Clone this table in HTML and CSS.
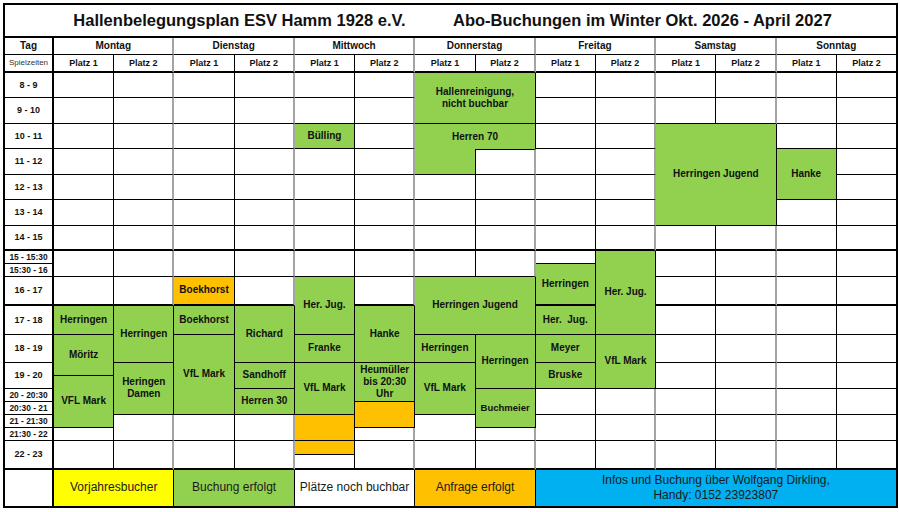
FILE: index.html
```html
<!DOCTYPE html>
<html lang="de">
<head>
<meta charset="utf-8">
<title>Hallenbelegungsplan ESV Hamm 1928 e.V.</title>
<link rel="stylesheet" href="styles.css">
</head>
<body>
<div class="plan">
  <!-- title -->
  <div class="c title"><span class="tl">Hallenbelegungsplan ESV Hamm 1928 e.V.</span><span class="tr">Abo-Buchungen im Winter Okt. 2026 - April 2027</span></div>

  <!-- day header -->
  <div class="c t hd">Tag</div>
  <div class="c s2 de hd">Montag</div>
  <div class="c s2 de hd">Dienstag</div>
  <div class="c s2 de hd">Mittwoch</div>
  <div class="c s2 de hd">Donnerstag</div>
  <div class="c s2 de hd">Freitag</div>
  <div class="c s2 de hd">Samstag</div>
  <div class="c s2 hd">Sonntag</div>

  <!-- platz header -->
  <div class="c t tb sp">Spielzeiten</div>
  <div class="c tb pl">Platz 1</div><div class="c tb de pl">Platz 2</div>
  <div class="c tb pl">Platz 1</div><div class="c tb de pl">Platz 2</div>
  <div class="c tb pl">Platz 1</div><div class="c tb de pl">Platz 2</div>
  <div class="c tb pl">Platz 1</div><div class="c tb de pl">Platz 2</div>
  <div class="c tb pl">Platz 1</div><div class="c tb de pl">Platz 2</div>
  <div class="c tb pl">Platz 1</div><div class="c tb de pl">Platz 2</div>
  <div class="c tb pl">Platz 1</div><div class="c tb pl">Platz 2</div>

  <!-- 8 - 9 -->
  <div class="c t">8 - 9</div>
  <div class="c"></div><div class="c de"></div>
  <div class="c"></div><div class="c de"></div>
  <div class="c"></div><div class="c de"></div>
  <div class="c g s2 r2 sm2"><span>Hallenreinigung,<br>nicht buchbar</span></div>
  <div class="c"></div><div class="c de"></div>
  <div class="c"></div><div class="c de"></div>
  <div class="c"></div><div class="c"></div>

  <!-- 9 - 10 -->
  <div class="c t">9 - 10</div>
  <div class="c"></div><div class="c de"></div>
  <div class="c"></div><div class="c de"></div>
  <div class="c"></div><div class="c de"></div>
  <div class="c"></div><div class="c de"></div>
  <div class="c"></div><div class="c de"></div>
  <div class="c"></div><div class="c"></div>

  <!-- 10 - 11 -->
  <div class="c t">10 - 11</div>
  <div class="c"></div><div class="c de"></div>
  <div class="c"></div><div class="c de"></div>
  <div class="c g">Bülling</div><div class="c de"></div>
  <div class="c g s2 nb">Herren 70</div>
  <div class="c"></div><div class="c de"></div>
  <div class="c g s2 r4">Herringen Jugend</div>
  <div class="c"></div><div class="c"></div>

  <!-- 11 - 12 -->
  <div class="c t">11 - 12</div>
  <div class="c"></div><div class="c de"></div>
  <div class="c"></div><div class="c de"></div>
  <div class="c"></div><div class="c de"></div>
  <div class="c g"></div><div class="c de bt"></div>
  <div class="c"></div><div class="c de"></div>
  <div class="c g r2">Hanke</div><div class="c"></div>

  <!-- 12 - 13 -->
  <div class="c t">12 - 13</div>
  <div class="c"></div><div class="c de"></div>
  <div class="c"></div><div class="c de"></div>
  <div class="c"></div><div class="c de"></div>
  <div class="c"></div><div class="c de"></div>
  <div class="c"></div><div class="c de"></div>
  <div class="c"></div>

  <!-- 13 - 14 -->
  <div class="c t">13 - 14</div>
  <div class="c"></div><div class="c de"></div>
  <div class="c"></div><div class="c de"></div>
  <div class="c"></div><div class="c de"></div>
  <div class="c"></div><div class="c de"></div>
  <div class="c"></div><div class="c de"></div>
  <div class="c"></div><div class="c"></div>

  <!-- 14 - 15 -->
  <div class="c t tb">14 - 15</div>
  <div class="c tb"></div><div class="c tb de"></div>
  <div class="c tb"></div><div class="c tb de"></div>
  <div class="c tb"></div><div class="c tb de"></div>
  <div class="c tb"></div><div class="c tb de"></div>
  <div class="c tb"></div><div class="c tb de"></div>
  <div class="c tb"></div><div class="c tb de"></div>
  <div class="c tb"></div><div class="c tb"></div>

  <!-- 15 - 15:30 -->
  <div class="c t st">15 - 15:30</div>
  <div class="c r2"></div><div class="c r2 de"></div>
  <div class="c r2"></div><div class="c r2 de"></div>
  <div class="c r2"></div><div class="c r2 de"></div>
  <div class="c r2"></div><div class="c r2 de"></div>
  <div class="c"></div>
  <div class="c g r4">Her. Jug.</div>
  <div class="c r2"></div><div class="c r2 de"></div>
  <div class="c r2"></div><div class="c r2"></div>

  <!-- 15:30 - 16 -->
  <div class="c t st">15:30 - 16</div>
  <div class="c g r2 tb">Herringen</div>

  <!-- 16 - 17 -->
  <div class="c t tb">16 - 17</div>
  <div class="c tb"></div><div class="c tb de"></div>
  <div class="c o tb">Boekhorst</div><div class="c tb de"></div>
  <div class="c g r2">Her. Jug.</div><div class="c tb de"></div>
  <div class="c g s2 r2">Herringen Jugend</div>
  <div class="c tb"></div><div class="c tb de"></div>
  <div class="c tb"></div><div class="c tb"></div>

  <!-- 17 - 18 -->
  <div class="c t">17 - 18</div>
  <div class="c g">Herringen</div>
  <div class="c g r2">Herringen</div>
  <div class="c g">Boekhorst</div>
  <div class="c g r2">Richard</div>
  <div class="c g r2">Hanke</div>
  <div class="c g">Her.&nbsp; Jug.</div>
  <div class="c"></div><div class="c de"></div>
  <div class="c"></div><div class="c"></div>

  <!-- 18 - 19 -->
  <div class="c t">18 - 19</div>
  <div class="c g r2">Möritz</div>
  <div class="c g r5 sm2">VfL Mark</div>
  <div class="c g">Franke</div>
  <div class="c g">Herringen</div>
  <div class="c g r3">Herringen</div>
  <div class="c g">Meyer</div>
  <div class="c g r3 sm2">VfL Mark</div>
  <div class="c"></div><div class="c de"></div>
  <div class="c"></div><div class="c"></div>

  <!-- 19 - 20 -->
  <div class="c t r2">19 - 20</div>
  <div class="c g r4"><span>Heringen<br>Damen</span></div>
  <div class="c g r2">Sandhoff</div>
  <div class="c g r4 sm2">VfL Mark</div>
  <div class="c g r3"><span>Heumüller<br>bis 20:30<br>Uhr</span></div>
  <div class="c g r4 sm2">VfL Mark</div>
  <div class="c g r2">Bruske</div>
  <div class="c r2"></div><div class="c r2 de"></div>
  <div class="c r2"></div><div class="c r2"></div>

  <!-- 19:30 -->
  <div class="c g r4">VFL Mark</div>

  <!-- 20 - 20:30 -->
  <div class="c t st">20 - 20:30</div>
  <div class="c g r2">Herren 30</div>
  <div class="c g r3 sm">Buchmeier</div>
  <div class="c r2"></div><div class="c r2 de"></div>
  <div class="c r2"></div><div class="c r2 de"></div>
  <div class="c r2"></div><div class="c r2"></div>

  <!-- 20:30 - 21 -->
  <div class="c t st">20:30 - 21</div>
  <div class="c o r2"></div>

  <!-- 21 - 21:30 -->
  <div class="c t st">21 - 21:30</div>
  <div class="c r2 de"></div>
  <div class="c r2"></div><div class="c r2 de"></div>
  <div class="c o r2"></div>
  <div class="c r2"></div>
  <div class="c r2"></div><div class="c r2 de"></div>
  <div class="c r2"></div><div class="c r2 de"></div>
  <div class="c r2"></div><div class="c r2"></div>

  <!-- 21:30 - 22 -->
  <div class="c t st">21:30 - 22</div>
  <div class="c"></div>
  <div class="c de"></div>
  <div class="c de"></div>

  <!-- 22 - 23 -->
  <div class="c t r2 tb">22 - 23</div>
  <div class="c r2 tb"></div><div class="c r2 tb de"></div>
  <div class="c r2 tb"></div><div class="c r2 tb de"></div>
  <div class="c o"></div><div class="c r2 tb de"></div>
  <div class="c r2 tb"></div><div class="c r2 tb de"></div>
  <div class="c r2 tb"></div><div class="c r2 tb de"></div>
  <div class="c r2 tb"></div><div class="c r2 tb de"></div>
  <div class="c r2 tb"></div><div class="c r2 tb"></div>

  <!-- 22:30 -->
  <div class="c tb"></div>

  <!-- legend -->
  <div class="c t"></div>
  <div class="c y s2 lg">Vorjahresbucher</div>
  <div class="c g s2 lg">Buchung erfolgt</div>
  <div class="c s2 lg">Plätze noch buchbar</div>
  <div class="c o s2 lg">Anfrage erfolgt</div>
  <div class="c b s6 lg"><span>Infos und Buchung über Wolfgang Dirkling,<br>Handy: 0152 23923807</span></div>
</div>
</body>
</html>
```
FILE: styles.css
```css
* {
  box-sizing: border-box;
  margin: 0;
  padding: 0;
}

body {
  margin: 0;
  background: #ffffff;
  font-family: "Liberation Sans", Arial, sans-serif;
  color: #000000;
}

.plan {
  margin: 3px 0 0 3px;
  width: 895px;
  display: grid;
  grid-template-columns: 49px repeat(14, 1fr);
  grid-template-rows:
    33px 17px 18px
    repeat(7, 25.43px)
    13px 13px 29px 29px 28px
    13px 13px 13px 13px 13px 13px
    14px 15px 37px;
  border-top: 2px solid #000;
  border-left: 2px solid #000;
  border-right: 1px solid #000;
  border-bottom: 1px solid #000;
}

.c {
  display: flex;
  align-items: center;
  justify-content: center;
  text-align: center;
  border-right: 1px solid #000;
  border-bottom: 1px solid #000;
  background: #ffffff;
  font-weight: bold;
  font-size: 10px;
  line-height: 1.2;
  color: #111;
  overflow: hidden;
  white-space: nowrap;
}

/* title row */
.title {
  grid-column: span 15;
  justify-content: flex-start;
  border-bottom-width: 2px;
  font-size: 16.5px;
  color: #111;
}

.tl {
  width: 448px;
  padding-left: 21px;
  text-align: center;
}

.tr {
  text-align: left;
}

/* tag column */
.t {
  border-right: 2px solid #000;
  font-size: 9px;
}

.st {
  font-size: 8.4px;
}

.hd {
  font-size: 10px;
}

.sp {
  font-weight: normal;
  font-size: 8px;
  color: #333;
}

.pl {
  font-size: 9px;
}

/* borders */
.de {
  border-right: 2px solid #a4a4a4;
}

.tb {
  border-bottom-width: 2px;
}

.nb {
  border-bottom: none;
}

.bt {
  border-top: 1px solid #000;
}

/* spans */
.s2 { grid-column: span 2; }
.s6 { grid-column: span 6; }
.r2 { grid-row: span 2; }
.r3 { grid-row: span 3; }
.r4 { grid-row: span 4; }
.r5 { grid-row: span 5; }

/* colours */
.g { background: #92d050; }
.o { background: #ffc000; }
.y { background: #ffff00; }
.b { background: #00b0f0; }

.sm { font-size: 9.5px; }
.sm2 { font-size: 10px; }

/* legend */
.lg {
  font-weight: normal;
  font-size: 12px;
  line-height: 1.25;
  color: #1a1a1a;
}
```
